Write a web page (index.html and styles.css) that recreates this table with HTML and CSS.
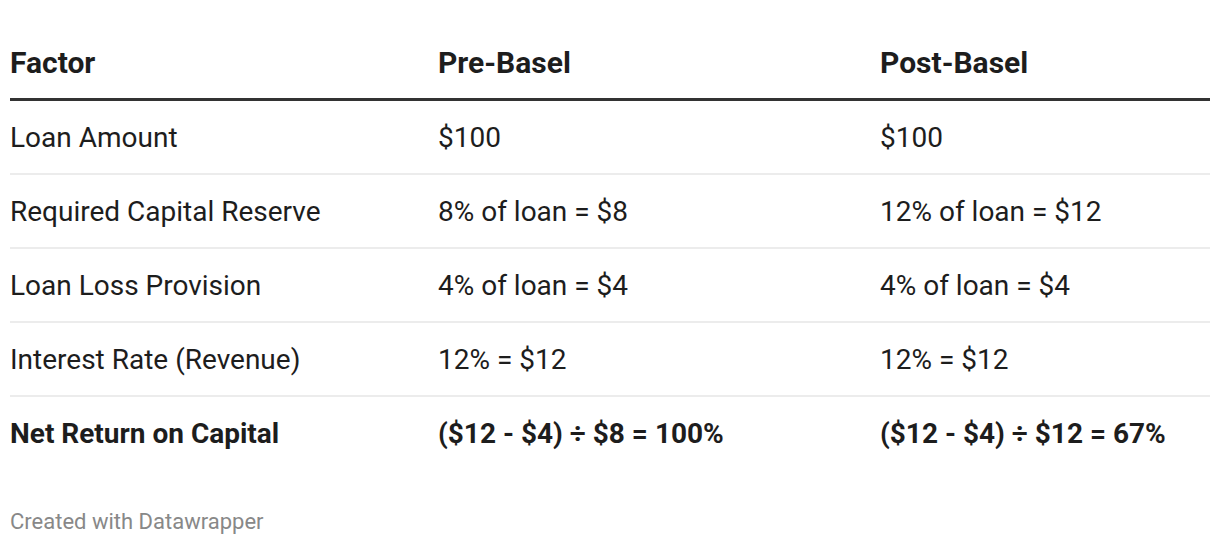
FILE: index.html
```html
<!DOCTYPE html>
<html>
<head>
<meta charset="utf-8">
<link rel="stylesheet" href="styles.css">
</head>
<body>
<div class="chart">
  <table class="tbl">
    <thead>
      <tr>
        <th class="c1">Factor</th>
        <th class="c2">Pre-Basel</th>
        <th class="c3">Post-Basel</th>
      </tr>
    </thead>
    <tbody>
      <tr><td>Loan Amount</td><td>$100</td><td>$100</td></tr>
      <tr><td>Required Capital Reserve</td><td>8% of loan = $8</td><td>12% of loan = $12</td></tr>
      <tr><td>Loan Loss Provision</td><td>4% of loan = $4</td><td>4% of loan = $4</td></tr>
      <tr><td>Interest Rate (Revenue)</td><td>12% = $12</td><td>12% = $12</td></tr>
      <tr class="strong"><td>Net Return on Capital</td><td>($12 - $4) ÷ $8 = 100%</td><td>($12 - $4) ÷ $12 = 67%</td></tr>
    </tbody>
  </table>
  <div class="footer">Created with Datawrapper</div>
</div>
</body>
</html>
```

FILE: styles.css
```css
html, body {
  margin: 0;
  padding: 0;
  background: #ffffff;
}
body {
  font-family: Roboto, "Liberation Sans", sans-serif;
  color: #1d1d1d;
}
.chart {
  padding: 0 10px;
}
.tbl {
  width: 1200px;
  border-collapse: collapse;
  table-layout: fixed;
}
.tbl th {
  text-align: left;
  font-weight: 700;
  font-size: 30px;
  line-height: 34px;
  padding: 46px 0 18px 0;
  border-bottom: 3px solid #333333;
}
.tbl .c1 { width: 428px; }
.tbl .c2 { width: 442px; }
.tbl .c3 { width: 330px; }
.tbl td {
  font-size: 28px;
  line-height: 32px;
  padding: 21px 0 19px 0;
  border-bottom: 2px solid #ececec;
}
.tbl tbody tr:last-child td {
  border-bottom: none;
}
.tbl tr.strong td {
  font-weight: 700;
}
.footer {
  margin-top: 40px;
  font-size: 22px;
  color: #888888;
}
```
